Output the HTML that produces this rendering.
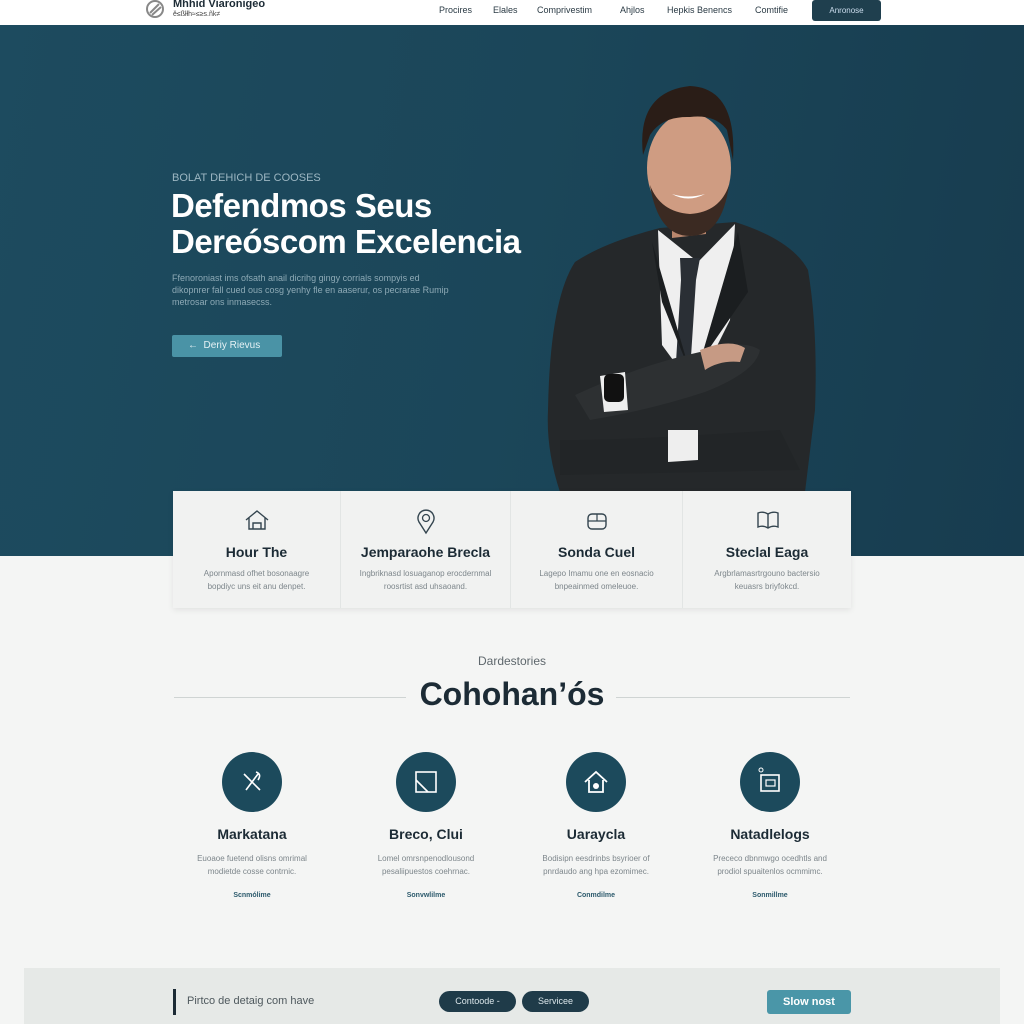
<!DOCTYPE html>
<html><head><meta charset="utf-8"><style>
*{margin:0;padding:0;box-sizing:border-box}
body{width:1024px;height:1024px;overflow:hidden;background:#f4f5f4;font-family:"Liberation Sans",sans-serif;position:relative}
.a{position:absolute}
.nav{top:0;left:0;width:1024px;height:25px;background:#fff}
.nl{font-size:9px;color:#2a3a44;top:5px}
.hero{top:25px;left:0;width:1024px;height:531px;background:linear-gradient(100deg,#1d4b5f 0%,#1b4659 50%,#173c4f 100%)}
.cards{top:491px;left:173px;width:678px;height:117px;background:#f1f2f1;box-shadow:0 2px 6px rgba(0,0,0,.08)}
.col{position:absolute;top:0;height:117px;text-align:center;border-right:1px solid #e2e5e4}
.col h3{position:absolute;top:53px;width:100%;font-size:14px;color:#1c2b35;font-weight:bold}
.col p{position:absolute;top:76px;width:100%;font-size:8px;line-height:13px;color:#7d868b}
.svc{position:absolute;top:752px;width:180px;text-align:center}
.svc .c{width:60px;height:60px;border-radius:50%;background:#1c4a5c;margin:0 auto}
.svc h3{margin-top:14px;font-size:14px;color:#1c2b35}
.svc p{margin-top:10px;font-size:8px;line-height:13px;color:#7d868b}
.svc a{display:block;margin-top:14px;font-size:7px;color:#2c5a6c;font-weight:bold}
</style></head><body>
<div class="a nav"></div>
<svg class="a" style="left:145px;top:0" width="20" height="20" viewBox="0 0 20 20"><circle cx="10" cy="9" r="8" fill="none" stroke="#888" stroke-width="2"/><path d="M5 13 L14 4 M7 15 L16 7" stroke="#888" stroke-width="2"/></svg>
<div class="a" style="left:173px;top:-2px;font-size:11px;font-weight:bold;color:#1c2b35">Mhhid Viaronigeo</div>
<div class="a" style="left:173px;top:11px;font-size:7px;color:#444">ĕ≤ßłłh≈≤≥s.ñk≠</div>
<div class="a nl" style="left:439px">Procires</div>
<div class="a nl" style="left:493px">Elales</div>
<div class="a nl" style="left:537px">Comprivestim</div>
<div class="a nl" style="left:620px">Ahjlos</div>
<div class="a nl" style="left:667px">Hepkis Benencs</div>
<div class="a nl" style="left:755px">Comtifie</div>
<div class="a" style="left:812px;top:0;width:69px;height:21px;background:#1f3f4e;border-radius:3px;color:#cde;font-size:8px;text-align:center;line-height:21px">Anronose</div>
<div class="a hero"></div>
<div class="a" style="left:172px;top:172px;font-size:11px;color:#9cb6c2">BOLAT DEHICH DE COOSES</div>
<div class="a" style="left:171px;top:188px;font-size:33px;line-height:36px;font-weight:bold;color:#fff;letter-spacing:-0.5px">Defendmos Seus<br>Dereóscom Excelencia</div>
<div class="a" style="left:172px;top:272px;font-size:9px;line-height:12px;color:#8eaab6;width:280px">Ffenoroniast ims ofsath anail dicrihg gingy corrials sompyis ed dikopnrer fall cued ous cosg yenhy fle en aaserur, os pecrarae Rumip metrosar ons inmasecss.</div>
<div class="a" style="left:172px;top:335px;width:110px;height:22px;background:#4a93a6;border-radius:2px;color:#e6f2f5;font-size:10px;line-height:22px;padding-left:16px">←&nbsp; Deriy Rievus</div>
<svg class="a" style="left:540px;top:80px" width="290" height="412" viewBox="540 80 290 412">
<path d="M548 410 Q550 300 575 262 Q605 242 660 228 L735 222 Q792 240 808 270 Q818 330 815 410 L805 492 L560 492 Q546 450 548 410Z" fill="#25282a"/>
<path d="M658 230 L698 262 L735 224 L730 320 L695 390 L662 345Z" fill="#efefef"/>
<path d="M680 258 L700 258 L696 280 L690 372 L676 362 L681 280Z" fill="#2a2f35"/>
<path d="M652 242 L690 372 L662 302Z M738 232 L700 362 L748 292Z" fill="#1b1e20"/>
<path d="M575 395 Q640 365 700 352 Q742 338 760 350 Q756 372 705 392 Q650 410 590 420Z" fill="#2d3032"/>
<path d="M700 350 Q730 338 745 348 L740 362 Q720 360 705 370Z" fill="#c69a84"/>
<path d="M600 376 L625 372 L628 410 L604 412Z" fill="#eee"/>
<rect x="604" y="374" width="20" height="28" rx="5" fill="#111"/>
<path d="M560 440 Q620 440 700 435 L780 430 L800 470 L560 475Z" fill="#222527"/>
<path d="M668 430 L698 430 L698 460 L668 462Z" fill="#eee"/>
<path d="M672 238 L706 234 L706 200 L672 200Z" fill="#b9876e"/>
<ellipse cx="689" cy="168" rx="42" ry="55" fill="#cf9c82"/>
<path d="M650 185 Q658 236 690 236 Q722 236 729 185 Q720 212 690 214 Q660 212 650 185Z" fill="#3b2a22"/>
<path d="M643 155 Q636 92 690 86 Q737 88 733 160 L727 130 Q715 114 690 117 Q662 116 650 135Z" fill="#2a1d17"/>
<path d="M672 194 Q688 203 705 194 Q688 199 672 194Z" fill="#fff"/>
</svg>
<div class="a cards">
<div class="col" style="left:0;width:168px"><svg class="a" style="left:71px;top:18px" width="26" height="22" viewBox="0 0 26 22"><path d="M2 11 L13 2 L24 11 M5 9 V20 H21 V9 M9 20 V14 H17 V20" fill="none" stroke="#34454f" stroke-width="1.4"/></svg><h3>Hour The</h3><p>Apornmasd ofhet bosonaagre<br>bopdiyc uns eit anu denpet.</p></div>
<div class="col" style="left:168px;width:170px"><svg class="a" style="left:74px;top:18px" width="22" height="26" viewBox="0 0 22 26"><path d="M11 24 L4 13 A8 8 0 1 1 18 13Z" fill="none" stroke="#34454f" stroke-width="1.4"/><circle cx="11" cy="9" r="3.5" fill="none" stroke="#34454f" stroke-width="1.3"/></svg><h3>Jemparaohe Brecla</h3><p>Ingbriknasd losuaganop erocdernmal<br>roosrtist asd uhsaoand.</p></div>
<div class="col" style="left:338px;width:172px"><svg class="a" style="left:74px;top:20px" width="24" height="22" viewBox="0 0 24 22"><rect x="3" y="3" width="18" height="15" rx="4" fill="none" stroke="#34454f" stroke-width="1.4"/><path d="M3 10 H21 M12 3 V10" stroke="#34454f" stroke-width="1.2"/></svg><h3>Sonda Cuel</h3><p>Lagepo Imamu one en eosnacio<br>bnpeainmed omeleuoe.</p></div>
<div class="col" style="left:510px;width:168px;border:none"><svg class="a" style="left:72px;top:18px" width="26" height="22" viewBox="0 0 26 22"><path d="M13 5 Q8 2 3 4 V18 Q8 16 13 19 Q18 16 23 18 V4 Q18 2 13 5 V19" fill="none" stroke="#34454f" stroke-width="1.4"/></svg><h3>Steclal Eaga</h3><p>Argbrlamasrtrgouno bactersio<br>keuasrs briyfokcd.</p></div>
</div>
<div class="a" style="left:0;top:654px;width:1024px;text-align:center;font-size:12px;color:#5e676c">Dardestories</div>
<div class="a" style="left:174px;top:697px;width:232px;height:1px;background:#cfd4d3"></div>
<div class="a" style="left:616px;top:697px;width:234px;height:1px;background:#cfd4d3"></div>
<div class="a" style="left:0;top:676px;width:1024px;text-align:center;font-size:32px;font-weight:bold;color:#1c2b35">Cohohan’ós</div>
<div class="svc" style="left:162px"><div class="c"><svg width="60" height="60" viewBox="0 0 60 60"><path d="M22 22 L38 38 M36 22 L24 38 M34 20 Q40 22 36 28" fill="none" stroke="#fff" stroke-width="1.6"/></svg></div><h3>Markatana</h3><p>Euoaoe fuetend olisns omrimal<br>modietde cosse contrnic.</p><a>Scnmólime</a></div>
<div class="svc" style="left:336px"><div class="c"><svg width="60" height="60" viewBox="0 0 60 60"><rect x="20" y="20" width="20" height="20" fill="none" stroke="#fff" stroke-width="1.6"/><path d="M20 28 L32 40" stroke="#fff" stroke-width="1.6"/></svg></div><h3>Breco, Clui</h3><p>Lomel omrsnpenodlousond<br>pesaliipuestos coehrnac.</p><a>Sonvwlilme</a></div>
<div class="svc" style="left:506px"><div class="c"><svg width="60" height="60" viewBox="0 0 60 60"><path d="M19 30 L30 20 L41 30 M23 28 V40 H37 V28" fill="none" stroke="#fff" stroke-width="1.8"/><circle cx="30" cy="34" r="3" fill="#fff"/></svg></div><h3>Uaraycla</h3><p>Bodisipn eesdrinbs bsyrioer of<br>pnrdaudo ang hpa ezomimec.</p><a>Conmdilme</a></div>
<div class="svc" style="left:680px"><div class="c"><svg width="60" height="60" viewBox="0 0 60 60"><rect x="21" y="23" width="18" height="16" fill="none" stroke="#fff" stroke-width="1.6"/><rect x="26" y="28" width="9" height="6" fill="none" stroke="#fff" stroke-width="1.2"/><circle cx="21" cy="18" r="2" fill="none" stroke="#fff"/></svg></div><h3>Natadlelogs</h3><p>Prececo dbnmwgo ocedhtls and<br>prodiol spuaitenlos ocmmimc.</p><a>Sonmillme</a></div>
<div class="a" style="left:24px;top:968px;width:976px;height:56px;background:#e6e9e7"></div>
<div class="a" style="left:173px;top:989px;width:3px;height:26px;background:#1c2b35"></div>
<div class="a" style="left:187px;top:995px;font-size:11px;color:#4e585d">Pirtco de detaig com have</div>
<div class="a" style="left:439px;top:991px;width:77px;height:21px;background:#1f3b49;border-radius:11px;color:#dbe6ea;font-size:9px;line-height:21px;text-align:center">Contoode -</div>
<div class="a" style="left:522px;top:991px;width:67px;height:21px;background:#1f3b49;border-radius:11px;color:#dbe6ea;font-size:9px;line-height:21px;text-align:center">Servicee</div>
<div class="a" style="left:767px;top:990px;width:84px;height:24px;background:#4a96a8;border-radius:3px;color:#fff;font-size:11px;font-weight:bold;line-height:24px;text-align:center">Slow nost</div>
</body></html>
